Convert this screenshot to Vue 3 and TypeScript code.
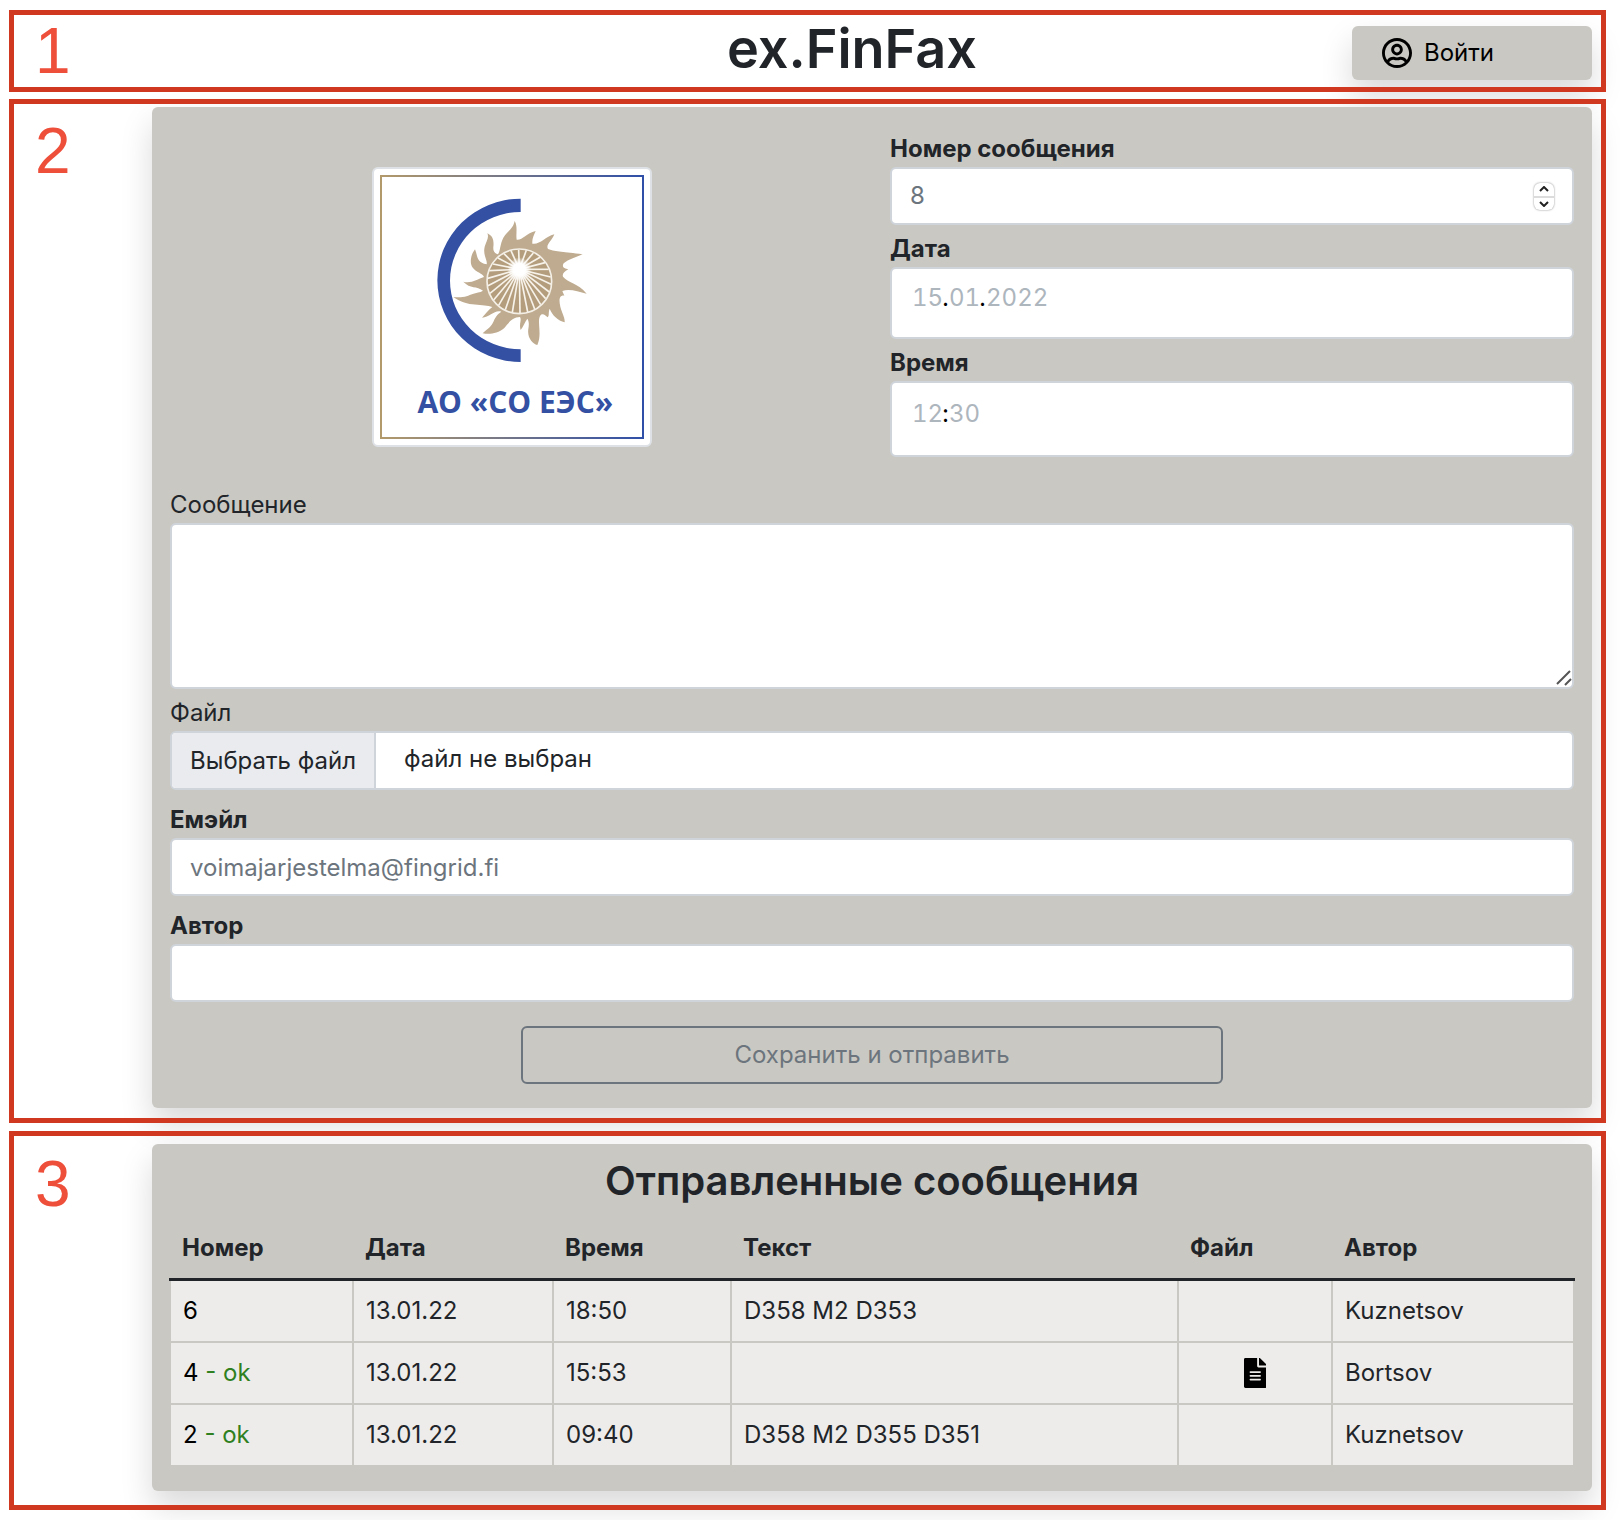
<script setup lang="ts">
import { ref } from 'vue'

interface Message {
  id: number
  ok: boolean
  date: string
  time: string
  text: string
  file: boolean
  author: string
}

const columns: string[] = ['Номер', 'Дата', 'Время', 'Текст', 'Файл', 'Автор']

const messages: Message[] = [
  { id: 6, ok: false, date: '13.01.22', time: '18:50', text: 'D358 M2 D353', file: false, author: 'Kuznetsov' },
  { id: 4, ok: true, date: '13.01.22', time: '15:53', text: '', file: true, author: 'Bortsov' },
  { id: 2, ok: true, date: '13.01.22', time: '09:40', text: 'D358 M2 D355 D351', file: false, author: 'Kuznetsov' },
]

const messageNumber = ref<number | null>(null)
const fileName = ref('')

function step(delta: number): void {
  messageNumber.value = (messageNumber.value || 8) + delta
}

function onFile(event: Event): void {
  const input = event.target as HTMLInputElement
  fileName.value = input.files && input.files.length ? input.files[0].name : ''
}

// Spokes of the turbine wheel, fanning out from its off-centre hub
const spokes = Array.from({ length: 26 }, (_, i) => {
  const angle = (i / 26) * Math.PI * 2 + 0.1
  return { x: Math.round(478 + 95 * Math.cos(angle)), y: Math.round(379 + 95 * Math.sin(angle)) }
})
</script>

<template>
  <div class="page">
    <header class="frame top">
      <span class="mark">1</span>
      <h1>ex.FinFax</h1>
      <button type="button" class="login">
        <svg viewBox="0 8 496 496" aria-hidden="true">
          <path d="M248 104c-53 0-96 43-96 96s43 96 96 96 96-43 96-96-43-96-96-96zm0 144c-26.500 0-48-21.500-48-48s21.500-48 48-48 48 21.500 48 48-21.500 48-48 48zm0-240C111 8 0 119 0 256s111 248 248 248 248-111 248-248S385 8 248 8zm0 448c-49.700 0-95.100-18.300-130.100-48.400 14.900-23 40.400-38.600 69.600-39.500 20.800 6.400 40.600 9.600 60.500 9.600s39.700-3.100 60.500-9.600c29.200 1 54.700 16.500 69.600 39.500-35 30.100-80.400 48.400-130.100 48.400zm162.700-84.100c-24.400-31.400-62.100-51.900-105.100-51.900-10.200 0-26 9.600-57.600 9.600-31.500 0-47.400-9.600-57.600-9.600-42.900 0-80.600 20.500-105.100 51.900C61.900 339.200 48 299.200 48 256c0-110.300 89.700-200 200-200s200 89.700 200 200c0 43.200-13.900 83.200-37.300 115.900z" />
        </svg>
        Войти
      </button>
    </header>

    <section class="frame compose">
      <span class="mark">2</span>
      <form class="card form" @submit.prevent>
        <div class="split">
          <div class="logo-side">
            <svg class="logo" viewBox="60 60 792 792" role="img" aria-label="АО «СО ЕЭС»">
              <defs>
                <linearGradient id="edge" x1="60" x2="852" y1="0" y2="0" gradientUnits="userSpaceOnUse">
                  <stop offset="0" stop-color="#b39a6b" />
                  <stop offset="1" stop-color="#2f4fa8" />
                </linearGradient>
                <radialGradient id="hub">
                  <stop offset="0.500" stop-color="#fff" />
                  <stop offset="1" stop-color="#fff" stop-opacity="0" />
                </radialGradient>
              </defs>
              <rect x="63" y="63" width="786" height="786" fill="#fff" stroke="url(#edge)" stroke-width="6" />
              <path fill="#3350a3" d="M482 131A250 245 0 0 0 482 621V583A212 206 0 0 1 482 171Z" />
              <path
                fill="#bfab8f"
                d="M464 198C474 215 467 235 470 254C488 256 498 235 527 228C520 244 516 252 517 266C540 270 554 246 583 238C576 257 556 270 564 282C590 292 610 289 668 298C645 308 626 313 611 325C604 338 614 340 625 343C612 350 606 357 609 365C624 384 653 383 680 416C654 410 628 400 607 408L613 422C596 420 597 438 601 455C606 475 615 486 614 502C594 497 576 480 569 461C564 474 569 480 563 487C556 480 550 475 543 479C528 494 548 535 532 570C518 568 501 548 505 522C508 504 506 497 502 491C493 503 491 514 482 525C476 507 486 496 480 486C456 486 444 506 433 519C413 536 389 539 368 535C382 522 395 515 401 499C408 481 416 476 424 470C404 463 390 486 366 488C376 477 384 466 397 456C372 445 322 458 280 426C309 430 324 422 338 417C349 412 360 413 369 407C350 391 331 403 310 380C334 386 352 373 372 366C366 350 327 351 333 311C334 300 340 290 345 283C353 302 349 323 380 328C383 314 368 302 374 275C379 258 388 248 382 235C400 243 402 258 400 276C399 291 405 295 414 298C421 289 420 267 430 248C443 228 459 222 464 198Z"
              />
              <circle cx="478" cy="379" r="97" fill="#b39d7c" stroke="#f4efe6" stroke-width="5" />
              <path
                v-for="(spoke, i) in spokes"
                :key="i"
                :d="`M478 343L${spoke.x} ${spoke.y}`"
                stroke="#f7f2ea"
                stroke-width="5"
              />
              <circle cx="478" cy="343" r="36" fill="url(#hub)" />
              <text x="466" y="775" text-anchor="middle" class="logo-text">АО «СО ЕЭС»</text>
            </svg>
          </div>
          <div class="fields">
            <label class="strong" for="number">Номер сообщения</label>
            <div class="box number">
              <input id="number" v-model="messageNumber" type="number" placeholder="8" />
              <span class="stepper">
                <button type="button" aria-label="Больше" @click="step(1)">
                  <svg viewBox="0 0 10 6" aria-hidden="true"><path d="M1 5L5 1L9 5" /></svg>
                </button>
                <button type="button" aria-label="Меньше" @click="step(-1)">
                  <svg viewBox="0 0 10 6" aria-hidden="true"><path d="M1 1L5 5L9 1" /></svg>
                </button>
              </span>
            </div>
            <label class="strong" for="day">Дата</label>
            <div class="box parts date">
              <input id="day" type="text" inputmode="numeric" maxlength="2" placeholder="15" />
              <span>.</span>
              <input type="text" inputmode="numeric" maxlength="2" placeholder="01" aria-label="Месяц" />
              <span>.</span>
              <input class="year" type="text" inputmode="numeric" maxlength="4" placeholder="2022" aria-label="Год" />
            </div>
            <label class="strong" for="hour">Время</label>
            <div class="box parts time">
              <input id="hour" type="text" inputmode="numeric" maxlength="2" placeholder="12" />
              <span>:</span>
              <input type="text" inputmode="numeric" maxlength="2" placeholder="30" aria-label="Минуты" />
            </div>
          </div>
        </div>

        <label for="message">Сообщение</label>
        <div class="area">
          <textarea id="message" class="box"></textarea>
          <svg class="grip" viewBox="0 0 16 16" aria-hidden="true"><path d="M1 14L14 1M9 15L15 9" /></svg>
        </div>

        <label class="after-area" for="file">Файл</label>
        <div class="box file">
          <input id="file" type="file" @change="onFile" />
          <label class="pick" for="file">Выбрать файл</label>
          <span class="file-name">{{ fileName || 'файл не выбран' }}</span>
        </div>

        <label class="strong spaced" for="email">Емэйл</label>
        <input id="email" class="box line" type="email" placeholder="voimajarjestelma@fingrid.fi" />

        <label class="strong spaced" for="author">Автор</label>
        <input id="author" class="box line" type="text" />

        <button type="submit" class="send">Сохранить и отправить</button>
      </form>
    </section>

    <section class="frame sent">
      <span class="mark">3</span>
      <div class="card list">
        <h2>Отправленные сообщения</h2>
        <table>
          <colgroup>
            <col class="c-number" />
            <col class="c-date" />
            <col class="c-time" />
            <col />
            <col class="c-file" />
            <col class="c-author" />
          </colgroup>
          <thead>
            <tr>
              <th v-for="column in columns" :key="column" scope="col">{{ column }}</th>
            </tr>
          </thead>
          <tbody>
            <tr v-for="message in messages" :key="message.id">
              <td>
                <a href="#">{{ message.id }}<span v-if="message.ok" class="ok"> - ok</span></a>
              </td>
              <td>{{ message.date }}</td>
              <td>{{ message.time }}</td>
              <td>{{ message.text }}</td>
              <td class="attachment">
                <a v-if="message.file" href="#" aria-label="Открыть файл">
                  <svg viewBox="0 0 384 512" aria-hidden="true">
                    <path d="M224 136V0H24C10.700 0 0 10.700 0 24v464c0 13.300 10.700 24 24 24h336c13.300 0 24-10.700 24-24V160H248c-13.200 0-24-10.800-24-24zm64 236c0 6.600-5.400 12-12 12H108c-6.600 0-12-5.400-12-12v-8c0-6.600 5.400-12 12-12h168c6.600 0 12 5.400 12 12v8zm0-64c0 6.600-5.400 12-12 12H108c-6.600 0-12-5.400-12-12v-8c0-6.600 5.400-12 12-12h168c6.600 0 12 5.400 12 12v8zm0-72v8c0 6.600-5.400 12-12 12H108c-6.600 0-12-5.400-12-12v-8c0-6.600 5.400-12 12-12h168c6.600 0 12 5.400 12 12zm96-114.100v6.100H256V0h6.100c6.400 0 12.500 2.500 17 7l97.900 98c4.500 4.500 7 10.600 7 16.900z" />
                  </svg>
                </a>
              </td>
              <td>{{ message.author }}</td>
            </tr>
          </tbody>
        </table>
      </div>
    </section>
  </div>
</template>

<style>
body {
  background: #fff;
}
</style>

<style scoped>
* {
  box-sizing: border-box;
}

.page {
  display: flex;
  flex-direction: column;
  gap: 8px;
  padding: 10px 14px 10px 9px;
  color: #212529;
  font-family: Inter, "Noto Sans", sans-serif;
  font-size: 24px;
  line-height: 36px;
}

input,
textarea,
button {
  font: inherit;
  color: inherit;
}

.frame {
  display: grid;
  grid-template-columns: 143px 1fr;
  align-items: start;
  padding: 8px 14px 15px 0;
  outline: 5px solid #d03920;
  outline-offset: -5px;
}

.frame.top {
  grid-template-columns: 143px 200px 1fr 240px;
  padding-top: 9px;
  padding-bottom: 9px;
  margin-bottom: -1px;
}

.frame.sent {
  padding-top: 13px;
  padding-bottom: 19px;
}

.mark {
  padding-left: 26px;
  color: #ee4f3b;
  font-family: "Liberation Sans", Arial, sans-serif;
  font-size: 64px;
  line-height: 64px;
}

.compose .mark {
  padding-top: 12px;
}

.sent .mark {
  padding-top: 8px;
}

h1 {
  grid-column: 3;
  margin: 0;
  font-size: 54px;
  font-weight: 600;
  line-height: 60px;
  text-align: center;
}

.login {
  display: flex;
  align-items: center;
  gap: 12px;
  margin-top: 7px;
  padding: 9px 30px;
  border: 0;
  border-radius: 6px;
  background: #cac8c2;
  box-shadow: 0 16px 32px rgba(0, 0, 0, 0.15);
  color: #000;
}

.login svg {
  width: 30px;
  height: 30px;
}

.card {
  min-width: 0;
  border-radius: 6px;
  background: #cac8c2;
  box-shadow: 0 16px 32px rgba(0, 0, 0, 0.15);
}

.form {
  display: flex;
  flex-direction: column;
  padding: 24px 18px;
}

.split {
  display: grid;
  grid-template-columns: 1fr 1fr;
  gap: 36px;
  margin-bottom: 30px;
}

.logo-side {
  display: flex;
  align-items: center;
  justify-content: center;
  padding-top: 26px;
}

.logo {
  width: 280px;
  height: 280px;
  padding: 6px;
  border: 2px solid #dee2e6;
  border-radius: 6px;
  background: #fff;
}

.logo-text {
  fill: #3350a3;
  font-family: "Open Sans", "Noto Sans", sans-serif;
  font-size: 90px;
  font-weight: 700;
}

.fields {
  display: flex;
  flex-direction: column;
}

.strong {
  font-weight: 700;
}

.fields .box + label {
  margin-top: 6px;
}

.after-area {
  margin-top: 6px;
}

.spaced {
  margin-top: 12px;
}

.box {
  width: 100%;
  border: 2px solid #ced4da;
  border-radius: 6px;
  background: #fff;
}

.line {
  height: 58px;
  padding: 0 18px;
}

.number {
  display: flex;
  align-items: center;
  height: 58px;
  padding: 0 18px;
}

.number input,
.parts input {
  min-width: 0;
  padding: 0;
  border: 0;
  outline: 0;
  background: none;
}

.number input {
  flex: 1;
  appearance: textfield;
}

::placeholder {
  color: #6c757d;
  opacity: 1;
}

.stepper {
  display: flex;
  flex-direction: column;
  width: 20px;
  border-radius: 6px;
  box-shadow: 0 0 2px rgba(0, 0, 0, 0.5);
}

.stepper button {
  display: flex;
  align-items: center;
  justify-content: center;
  height: 13px;
  padding: 0;
  border: 0;
  background: none;
}

.stepper button + button {
  border-top: 2px solid #dcdcdc;
  height: 14px;
}

.stepper svg {
  width: 10px;
  height: 6px;
  fill: none;
  stroke: #222;
  stroke-width: 2;
}

.parts {
  display: flex;
  align-items: flex-start;
  padding: 11px 20px;
  font-variant-numeric: tabular-nums;
}

.parts input {
  width: 30px;
  height: 36px;
}

.parts .year {
  width: 64px;
}

.parts span {
  width: 7px;
  text-align: center;
  color: #000;
}

.parts ::placeholder {
  color: #adb5bd;
}

.date {
  height: 72px;
}

.time {
  height: 76px;
  padding-top: 13px;
}

.area {
  display: flex;
  position: relative;
}

textarea {
  height: 166px;
  padding: 10px 18px;
  resize: none;
}

.grip {
  position: absolute;
  right: 2px;
  bottom: 3px;
  width: 16px;
  height: 16px;
  stroke: #555;
  stroke-width: 2;
}

.file {
  display: flex;
  position: relative;
  height: 59px;
  overflow: hidden;
}

.file input {
  position: absolute;
  inset: 0;
  opacity: 0;
}

.pick {
  padding: 10px 18px;
  border-right: 2px solid #ced4da;
  background: #e9ebef;
}

.file-name {
  padding: 8px 28px;
}

.send {
  align-self: center;
  width: 50%;
  height: 58px;
  margin-top: 24px;
  border: 2px solid #6c757d;
  border-radius: 6px;
  background: none;
  color: #6c757d;
}

.list {
  padding: 12px 17px 24px;
}

h2 {
  margin: 0 0 24px;
  font-size: 40px;
  font-weight: 600;
  line-height: 50px;
  text-align: center;
}

table {
  width: 100%;
  table-layout: fixed;
  border-collapse: collapse;
}

.c-number {
  width: 183px;
}

.c-date {
  width: 200px;
}

.c-time {
  width: 178px;
}

.c-file {
  width: 154px;
}

.c-author {
  width: 242px;
}

th,
td {
  padding: 12px;
  text-align: left;
}

th {
  padding-top: 0;
  border-bottom: 3px solid #212529;
}

td {
  height: 62px;
  border: 2px solid #cac8c2;
  background: #eeeceb;
}

td a {
  color: #000;
  text-decoration: none;
}

.ok {
  color: #2f8020;
}

.attachment {
  text-align: center;
  line-height: 0;
}

.attachment svg {
  height: 30px;
}
</style>
